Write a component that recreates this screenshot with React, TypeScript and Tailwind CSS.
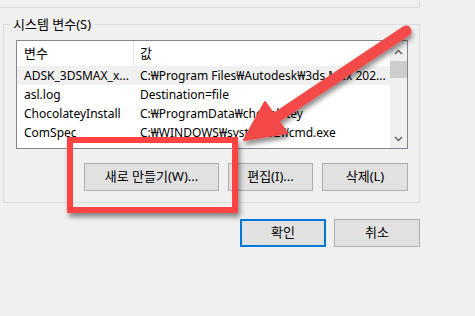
import React from "react";

const FONT = '"Segoe UI", "Noto Sans", "Noto Sans CJK KR", sans-serif';

function Btn({ w, children, primary }: { w: string; children: React.ReactNode; primary?: boolean }) {
  return (
    <div
      className={`${w} h-[28px] flex items-center justify-center bg-[#e1e1e1] text-[13px] text-black ${
        primary ? "border-2 border-[#0078d7]" : "border border-[#adadad]"
      }`}
    >
      {children}
    </div>
  );
}

const rows = [
  ["ADSK_3DSMAX_x...", "C:₩Program Files₩Autodesk₩3ds Max 202...", true],
  ["asl.log", "Destination=file", false],
  ["ChocolateyInstall", "C:₩ProgramData₩chocolatey", false],
  ["ComSpec", "C:₩WINDOWS₩system32₩cmd.exe", false],
] as const;

export default function App() {
  return (
    <div
      className="relative w-[475px] h-[316px] bg-[#f0f0f0] overflow-hidden text-black"
      style={{ fontFamily: FONT }}
    >
      {/* top box remnant */}
      <div className="w-[420px] h-[8px] border-r border-b border-[#dcdcdc]" />

      {/* group box */}
      <div className="relative ml-[3px] mt-[16px] w-[417px] h-[179px] border border-[#dcdcdc] pt-[15px] pl-[12px]">
        <span className="absolute left-[6px] top-[-10px] px-[3px] bg-[#f0f0f0] text-[13px] leading-[18px]">
          시스템 변수(S)
        </span>

        {/* list view */}
        <div className="w-[392px] h-[109px] border border-[#828790] bg-white flex">
          <div className="flex-1 flex flex-col">
            <div className="h-[25px] flex text-[12px] leading-[25px]">
              <div className="w-[117px] pl-[7px] border-r border-[#e5e5e5] text-[13px]">변수</div>
              <div className="pl-[6px] text-[13px]">값</div>
            </div>
            {rows.map(([a, b, sel]) => (
              <div
                key={a}
                className={`h-[19px] flex text-[12px] leading-[19px] whitespace-nowrap ${sel ? "bg-[#f0f0f0]" : ""}`}
              >
                <div className="w-[117px] pl-[7px] overflow-hidden">{a}</div>
                <div className="pl-[6px] overflow-hidden flex-1">{b}</div>
              </div>
            ))}
          </div>
          {/* scrollbar */}
          <div className="w-[17px] bg-[#f0f0f0] flex flex-col items-center">
            <svg width="17" height="17" viewBox="0 0 17 17" className="mt-[3px]">
              <path d="M5 10 L8.5 6.5 L12 10" fill="none" stroke="#606060" strokeWidth="1.5" />
            </svg>
            <div className="w-[17px] h-[17px] bg-[#cdcdcd]" />
            <div className="flex-1" />
            <svg width="17" height="17" viewBox="0 0 17 17" className="mb-[1px]">
              <path d="M5 7 L8.5 10.5 L12 7" fill="none" stroke="#606060" strokeWidth="1.5" />
            </svg>
          </div>
        </div>

        {/* buttons */}
        <div className="w-[392px] mt-[14px] flex justify-end gap-[9px]">
          <Btn w="w-[135px]">새로 만들기(W)...</Btn>
          <Btn w="w-[85px]">편집(I)...</Btn>
          <Btn w="w-[86px]">삭제(L)</Btn>
        </div>
      </div>

      {/* dialog buttons */}
      <div className="w-[420px] mt-[16px] flex justify-end gap-[8px]">
        <Btn w="w-[86px]" primary>
          확인
        </Btn>
        <Btn w="w-[86px]">취소</Btn>
      </div>

      {/* annotation: red rectangle */}
      <div className="absolute left-[67px] top-[137px] w-[171px] h-[76px] border-[6px] border-[#ff4343] shadow-[2px_4px_5px_rgba(0,0,0,0.45)]" />

      {/* annotation: arrow */}
      <svg className="absolute left-0 top-0" width="475" height="316" viewBox="0 0 475 316">
        <defs>
          <filter id="sh" x="-20%" y="-20%" width="140%" height="140%">
            <feDropShadow dx="1" dy="4" stdDeviation="2.5" floodColor="#000" floodOpacity="0.45" />
          </filter>
        </defs>
        <g filter="url(#sh)" fill="#f44848" stroke="#f44848">
          <line x1="406" y1="31" x2="274" y2="119" strokeWidth="11" strokeLinecap="round" />
          <polygon points="244,140 287,133 265,102" strokeWidth="2" strokeLinejoin="round" />
        </g>
      </svg>
    </div>
  );
}
